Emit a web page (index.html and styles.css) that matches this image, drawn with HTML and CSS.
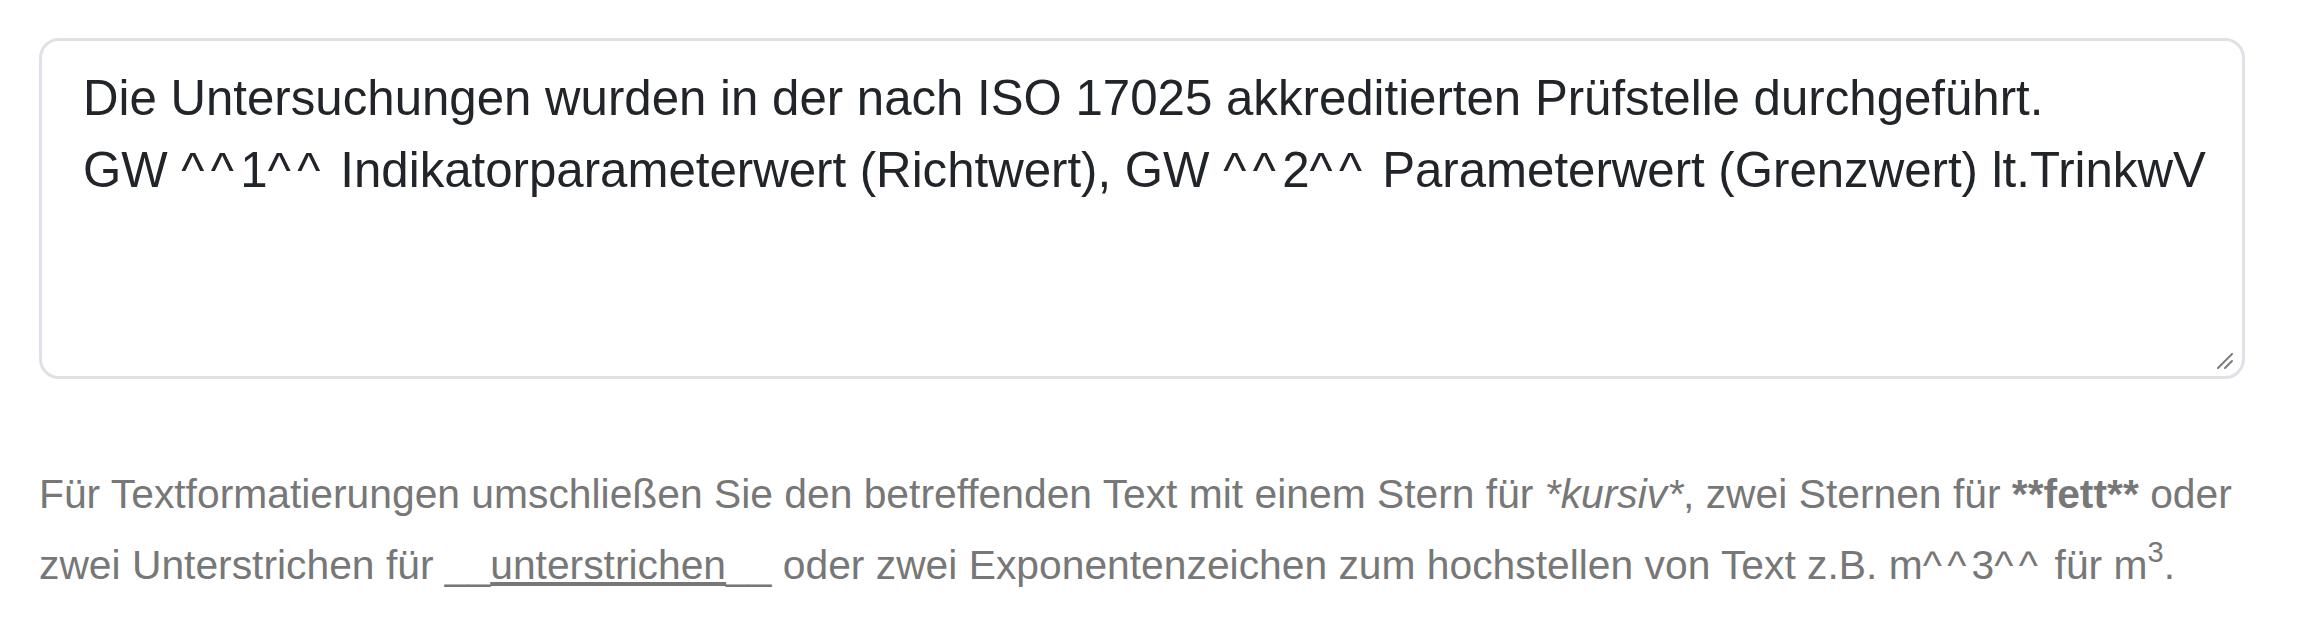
FILE: index.html
```html
<!DOCTYPE html>
<html lang="de">
<head>
<meta charset="utf-8">
<title>Bemerkung</title>
<link rel="stylesheet" href="styles.css">
</head>
<body>
<div class="page">
  <div class="field">
    <div class="field-input" role="textbox" aria-multiline="true">Die Untersuchungen wurden in der nach ISO 17025 akkreditierten Prüfstelle durchgeführt.
GW <span class="caret">^^</span>1<span class="caret">^^</span> Indikatorparameterwert (Richtwert), GW <span class="caret">^^</span>2<span class="caret">^^</span> Parameterwert (Grenzwert) lt.TrinkwV</div>
    <svg class="grip" width="16" height="16" viewBox="0 0 16 16" aria-hidden="true">
      <line x1="1" y1="15" x2="15" y2="1" stroke="#7b7b7b" stroke-width="2" stroke-linecap="round"/>
      <line x1="8" y1="15" x2="15" y2="8" stroke="#7b7b7b" stroke-width="2" stroke-linecap="round"/>
    </svg>
  </div>
  <p class="help">Für Textformatierungen umschließen Sie den betreffenden Text mit einem Stern für <em>*kursiv*</em>, zwei Sternen für <strong>**fett**</strong> oder zwei Unterstrichen für __<u>unterstrichen</u>__ oder zwei Exponentenzeichen zum hochstellen von Text z.B. m<span class="caret">^^</span>3<span class="caret">^^</span> für m<sup>3</sup>.</p>
</div>
</body>
</html>
```
FILE: styles.css
```css
html, body {
  margin: 0;
  padding: 0;
  background: #ffffff;
}

.page {
  padding: 38px 53px 0 39px;
  font-family: "Liberation Sans", Arial, Helvetica, sans-serif;
}

.field {
  position: relative;
}

.field-input {
  box-sizing: border-box;
  width: 100%;
  height: 341px;
  margin: 0;
  padding: 21px 36px 18px 41px;
  border: 3px solid #dee2e6;
  border-radius: 20px;
  background: #ffffff;
  color: #212529;
  font-family: "Liberation Sans", Arial, Helvetica, sans-serif;
  font-size: 49.2px;
  line-height: 72px;
  white-space: pre-wrap;
  overflow: hidden;
}

.caret {
  letter-spacing: 0.13em;
}

.grip {
  position: absolute;
  right: 12px;
  bottom: 10px;
}

.help {
  margin: 80px 0 0 0;
  color: #777777;
  font-size: 40.8px;
  line-height: 71px;
}

.help sup {
  font-size: 29px;
  line-height: 0;
  vertical-align: 17px;
}
```
